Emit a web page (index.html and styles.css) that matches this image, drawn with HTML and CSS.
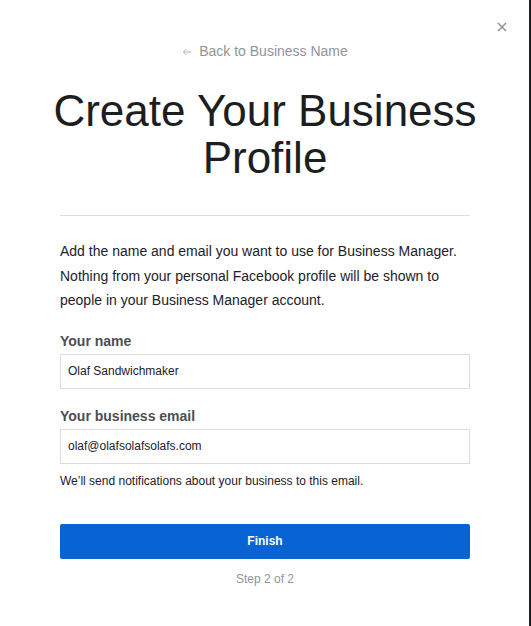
FILE: index.html
```html
<!DOCTYPE html>
<html>
<head>
<meta charset="utf-8">
<link rel="stylesheet" href="styles.css">
</head>
<body>
<div class="dialog">
  <button class="close" aria-label="Close">
    <svg width="10" height="10" viewBox="0 0 10 10"><path d="M1 1L9 9M9 1L1 9" stroke="#8d949e" stroke-width="1.5" fill="none"/></svg>
  </button>
  <main class="content">
    <a class="back" href="#"><svg class="arrow" width="10" height="8" viewBox="0 0 10 8"><path d="M9.5 4H1.5M4.5 1L1.5 4L4.5 7" stroke="#b0b3b8" stroke-width="1" fill="none"/></svg>Back to Business Name</a>
    <h1 class="title">Create Your Business Profile</h1>
    <hr class="divider">
    <p class="intro">Add the name and email you want to use for Business Manager. Nothing from your personal Facebook profile will be shown to people in your Business Manager account.</p>
    <label class="label label-first">Your name</label>
    <div class="input">Olaf Sandwichmaker</div>
    <label class="label">Your business email</label>
    <div class="input">olaf@olafsolafsolafs.com</div>
    <p class="help">We’ll send notifications about your business to this email.</p>
    <button class="finish">Finish</button>
    <p class="step">Step 2 of 2</p>
  </main>
</div>
</body>
</html>
```

FILE: styles.css
```css
html, body {
  margin: 0;
  padding: 0;
  background: #ffffff;
}
body {
  font-family: "Liberation Sans", Arial, sans-serif;
  color: #1d2129;
}
.dialog {
  position: relative;
  height: 626px;
  box-sizing: border-box;
  border-right: 2px solid #1c1e21;
  background: #ffffff;
}
.close {
  position: absolute;
  top: 22px;
  left: 497px;
  width: 10px;
  height: 10px;
  padding: 0;
  border: 0;
  background: none;
  display: flex;
}
.content {
  width: 410px;
  margin-left: 60px;
  padding-top: 41px;
  display: flex;
  flex-direction: column;
}
.back {
  align-self: center;
  display: flex;
  align-items: center;
  gap: 7px;
  font-size: 14px;
  line-height: 20px;
  color: #90949c;
  text-decoration: none;
}
.arrow {
  margin-top: 1px;
}
.title {
  margin: 26px -25px 0;
  font-size: 44px;
  line-height: 47px;
  font-weight: normal;
  text-align: center;
  color: #1c1e21;
}
.divider {
  margin: 34px 0 0;
  border: 0;
  border-top: 1px solid #dddfe2;
  height: 0;
}
.intro {
  margin: 23px 0 0;
  font-size: 14px;
  line-height: 24.5px;
  color: #1d2129;
}
.label {
  margin-top: 18px;
  font-size: 14px;
  line-height: 18px;
  font-weight: bold;
  color: #4b4f56;
}
.label-first {
  margin-top: 19px;
}
.input {
  margin-top: 4px;
  height: 35px;
  box-sizing: border-box;
  border: 1px solid #dadde1;
  padding: 0 7px;
  font-size: 12px;
  line-height: 33px;
  color: #1d2129;
}
.help {
  margin: 9px 0 0;
  font-size: 12px;
  line-height: 16px;
  color: #1d2129;
}
.finish {
  margin-top: 35px;
  height: 35px;
  border: 0;
  border-radius: 2px;
  background: #0863d4;
  color: #ffffff;
  font-family: "Liberation Sans", Arial, sans-serif;
  font-size: 12px;
  font-weight: bold;
}
.step {
  margin: 12px 0 0;
  text-align: center;
  font-size: 12px;
  line-height: 16px;
  color: #90949c;
}
```
